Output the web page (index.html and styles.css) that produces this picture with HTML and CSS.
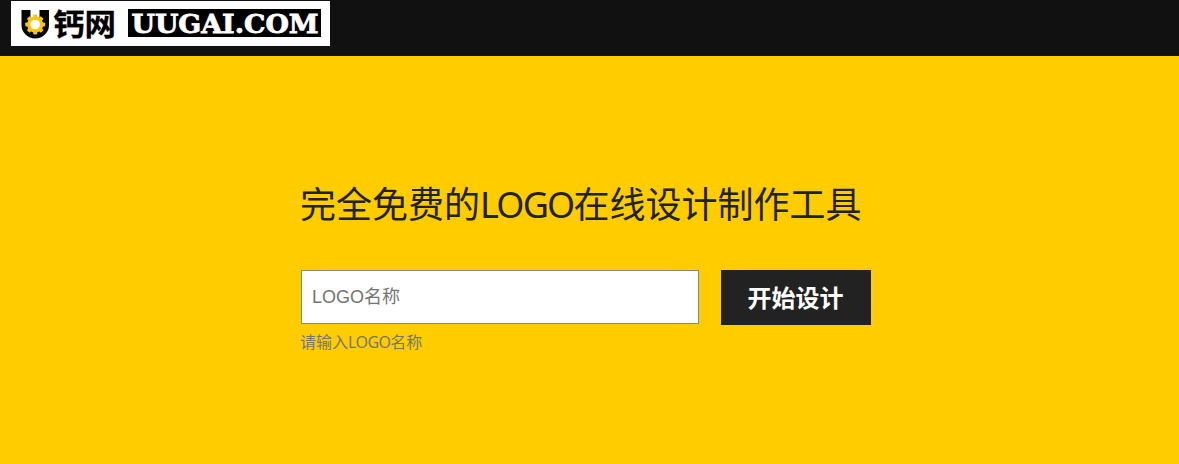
FILE: index.html
```html
<!DOCTYPE html>
<html lang="zh-CN">
<head>
<meta charset="utf-8">
<title>U钙网</title>
<link rel="stylesheet" href="styles.css">
</head>
<body>
<header class="header">
  <a class="brand">
    <svg class="brand-logo" width="319" height="45" viewBox="0 0 319 45">
      <path d="M10.500 9h9v14h9V9h9.500v15a13.700 13.500 0 0 1-27.500 0z" fill="#050505"/>
      <g fill="#fdc40d">
        <circle cx="24.200" cy="23.500" r="8"/>
        <rect x="22.200" y="13.600" width="4" height="19.800" rx=".8"/>
        <rect x="22.200" y="13.600" width="4" height="19.800" rx=".8" transform="rotate(45 24.200 23.500)"/>
        <rect x="22.200" y="13.600" width="4" height="19.800" rx=".8" transform="rotate(90 24.200 23.500)"/>
        <rect x="22.200" y="13.600" width="4" height="19.800" rx=".8" transform="rotate(135 24.200 23.500)"/>
      </g>
      <circle cx="24.200" cy="23.500" r="4.800" fill="#fff"/>
      <text class="brand-cn" x="42" y="34" textLength="63" lengthAdjust="spacingAndGlyphs">钙网</text>
      <rect x="117" y="8" width="193" height="28"/>
      <text class="brand-en" x="120.500" y="32" textLength="187" lengthAdjust="spacingAndGlyphs">UUGAI.COM</text>
    </svg>
  </a>
</header>
<main class="hero">
  <div class="hero-inner">
    <h1 class="title">完全免费的<span class="title-latin">LOGO</span>在线设计制作工具</h1>
    <form class="form">
      <div class="field">
        <input class="name-input" type="text" placeholder="LOGO名称">
        <p class="hint">请输入<span class="hint-latin">LOGO</span>名称</p>
      </div>
      <button class="submit" type="button">开始设计</button>
    </form>
  </div>
</main>
</body>
</html>
```
FILE: styles.css
```css
* { box-sizing: border-box; }
body {
  margin: 0;
  min-height: 464px;
  background: #fc0;
  color: #222;
  font-family: "Noto Sans", "Noto Sans CJK SC", sans-serif;
}
.header { height: 56px; padding: 1px 0 0 11px; background: #111; }
.brand { display: block; width: 319px; height: 45px; background: #fff; }
.brand-logo { display: block; overflow: visible; }
.brand-cn { font: bold 30px "Noto Sans CJK SC", sans-serif; fill: #000; stroke: #000; stroke-width: .3px; }
.brand-en { font: bold 26.5px "DejaVu Serif", serif; fill: #fff; stroke: #fff; stroke-width: .8px; }
.hero { padding: 122px 0 0 300px; }
.hero-inner { width: 571px; }
.title {
  margin: 0;
  height: 54px;
  line-height: 54px;
  font-size: 36px;
  font-weight: 400;
  white-space: nowrap;
}
.title-latin { letter-spacing: -1.8px; }
.form { display: flex; gap: 22px; margin: 38px 0 0 1px; }
.field { width: 398px; }
.name-input {
  display: block;
  width: 398px;
  height: 54px;
  padding: 0 9px 0 10px;
  border: 1px solid #888;
  border-radius: 0;
  background: #fff;
  font: 18px "Liberation Sans", "Noto Sans CJK SC", sans-serif;
}
.name-input::placeholder { color: #757575; }
.hint { margin: 6px 0 0 -1px; font-size: 16px; line-height: 24px; color: #777; }
.hint-latin { letter-spacing: -.6px; }
.submit {
  width: 150px;
  height: 55px;
  padding: 0 1px 2px 0;
  border: 0;
  background: #222;
  color: #fff;
  font: bold 24px "Noto Sans CJK SC", sans-serif;
}
```
